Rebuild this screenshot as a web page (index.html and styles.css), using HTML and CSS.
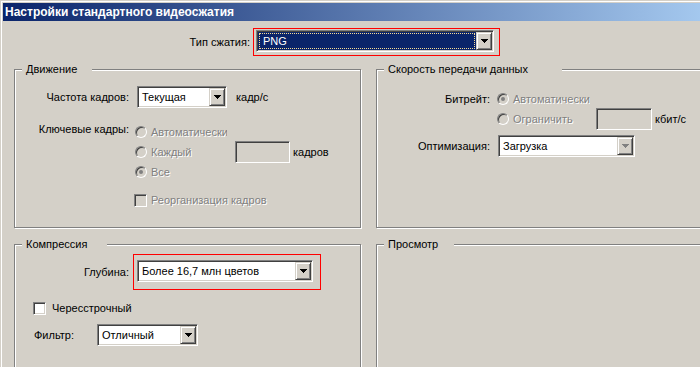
FILE: index.html
```html
<!DOCTYPE html>
<html lang="ru">

<head>
    <meta charset="UTF-8">
    <meta name="viewport" content="width=device-width, initial-scale=1.0">
    <link rel="stylesheet" href="styles.css">
    <title>Настройки стандартного видеосжатия</title>
</head>

<body>
    <div class="window">
        <div class="titlebar">Настройки стандартного видеосжатия</div>

        <!-- Тип сжатия -->
        <div class="type-row">
            <span class="type-label">Тип сжатия:</span>
            <div class="mark mark-type">
                <div class="combo combo-type">
                    <span class="combo-field selected"><span class="focus">PNG</span></span>
                    <span class="combo-btn"><svg width="7" height="4"><path d="M0 0H7V1H6V2H5V3H4V4H3V3H2V2H1V1H0Z"/></svg></span>
                </div>
            </div>
        </div>

        <div class="groups">
            <!-- Движение -->
            <div class="group group-motion">
                <span class="legend legend-motion">Движение</span>
                <div class="row">
                    <span class="lbl">Частота кадров:</span>
                    <div class="combo combo-rate">
                        <span class="combo-field">Текущая</span>
                        <span class="combo-btn"><svg width="7" height="4"><path d="M0 0H7V1H6V2H5V3H4V4H3V3H2V2H1V1H0Z"/></svg></span>
                    </div>
                    <span class="unit">кадр/с</span>
                </div>
                <div class="keyframes">
                    <span class="lbl lbl-top">Ключевые кадры:</span>
                    <div class="radios">
                        <div class="opt">
                            <span class="radio-item disabled"><span class="radio"></span>Автоматически</span>
                        </div>
                        <div class="opt">
                            <span class="radio-item disabled"><span class="radio"></span>Каждый</span>
                            <span class="edit edit-frames"></span>
                            <span class="after-edit">кадров</span>
                        </div>
                        <div class="opt">
                            <span class="radio-item disabled"><span class="radio checked"></span>Все</span>
                        </div>
                        <div class="opt opt-check disabled">
                            <span class="check"></span>Реорганизация кадров
                        </div>
                    </div>
                </div>
            </div>

            <!-- Скорость передачи данных -->
            <div class="group group-rate">
                <span class="legend legend-rate">Скорость передачи данных</span>
                <div class="row opt">
                    <span class="lbl lbl-rate">Битрейт:</span>
                    <span class="radio-item radio-wide disabled"><span class="radio checked"></span>Автоматически</span>
                </div>
                <div class="row opt opt-indent">
                    <span class="radio-item disabled"><span class="radio"></span>Ограничить</span>
                    <span class="edit edit-kbit"></span>
                    <span class="after-edit">кбит/с</span>
                </div>
                <div class="row row-optimize">
                    <span class="lbl lbl-rate">Оптимизация:</span>
                    <div class="combo combo-optimize">
                        <span class="combo-field">Загрузка</span>
                        <span class="combo-btn btn-disabled"><svg width="7" height="4"><path d="M0 0H7V1H6V2H5V3H4V4H3V3H2V2H1V1H0Z"/></svg></span>
                    </div>
                </div>
            </div>

            <!-- Компрессия -->
            <div class="group group-compress">
                <span class="legend legend-compress">Компрессия</span>
                <div class="row">
                    <span class="lbl">Глубина:</span>
                    <div class="mark mark-depth">
                        <div class="combo combo-depth">
                            <span class="combo-field">Более 16,7 млн цветов</span>
                            <span class="combo-btn"><svg width="7" height="4"><path d="M0 0H7V1H6V2H5V3H4V4H3V3H2V2H1V1H0Z"/></svg></span>
                        </div>
                    </div>
                </div>
                <div class="opt opt-interlace">
                    <span class="check check-on"></span>Чересстрочный
                </div>
                <div class="row row-filter">
                    <span class="lbl-filter">Фильтр:</span>
                    <div class="combo combo-filter">
                        <span class="combo-field">Отличный</span>
                        <span class="combo-btn"><svg width="7" height="4"><path d="M0 0H7V1H6V2H5V3H4V4H3V3H2V2H1V1H0Z"/></svg></span>
                    </div>
                </div>
            </div>

            <!-- Просмотр -->
            <div class="group group-preview">
                <span class="legend legend-preview">Просмотр</span>
            </div>
        </div>
    </div>
</body>

</html>
```

FILE: styles.css
```css
/* General */
html,
body {
    width: 700px;
    height: 367px;
    overflow: hidden;
}

body {
    margin: 0;
    background-color: #d4d0c8;
    color: #000;
    font-family: "Liberation Sans", Arial, sans-serif;
    font-size: 11px;
    line-height: 14px;
}

.window {
    width: 706px;
    margin: 1px 0 0 1px;
    padding: 1px 0 0 1px;
    border-top: 1px solid #fff;
    border-left: 1px solid #fff;
}

.titlebar {
    height: 18px;
    line-height: 18px;
    padding-left: 2px;
    background: linear-gradient(to right, #0a246a, #a6caf0);
    color: #fff;
    font-size: 12px;
    font-weight: bold;
    white-space: nowrap;
}

/* Тип сжатия */
.type-row {
    display: flex;
    align-items: center;
    margin-top: 7px;
}

.type-label {
    width: 247px;
    text-align: right;
}

.mark {
    border: 1px solid #ff0000;
}

.mark-type {
    margin-left: 3px;
    padding: 1px 5px 3px 2px;
}

.mark-depth {
    margin-left: 4px;
    padding: 5px 7px 7px 3px;
}

/* Combo box */
.combo {
    display: flex;
    height: 22px;
    box-sizing: border-box;
    padding: 1px;
    border: 1px solid;
    border-color: #808080 #fff #fff #808080;
    box-shadow: inset 1px 1px 0 #404040, inset -1px -1px 0 #d4d0c8;
    background: #d4d0c8;
}

.combo-field {
    flex: 1;
    background: #fff;
    line-height: 18px;
    padding-left: 3px;
    white-space: nowrap;
    overflow: hidden;
}

.combo-field.selected {
    background: #0a246a;
    color: #fff;
    padding: 1px;
}

.focus {
    display: block;
    height: 16px;
    line-height: 14px;
    box-sizing: border-box;
    padding-left: 3px;
    border: 1px dotted #f5db95;
}

.combo-btn {
    flex: none;
    width: 16px;
    height: 18px;
    box-sizing: border-box;
    display: flex;
    align-items: center;
    justify-content: center;
    background: #d4d0c8;
    border: 1px solid;
    border-color: #d4d0c8 #404040 #404040 #d4d0c8;
    box-shadow: inset 1px 1px 0 #fff, inset -1px -1px 0 #808080;
}

.combo-btn svg {
    display: block;
    fill: #000;
}

.btn-disabled svg {
    fill: #808080;
}

.combo-type {
    width: 238px;
}

.combo-rate {
    width: 90px;
    margin-left: 8px;
}

.combo-optimize {
    width: 137px;
    margin-left: 8px;
}

.combo-depth {
    width: 176px;
}

.combo-filter {
    width: 101px;
}

/* Group boxes */
.groups {
    display: grid;
    grid-template-columns: 347px 340px;
    grid-template-rows: 159px 140px;
    gap: 16px 15px;
    margin-top: 13px;
    padding-left: 11px;
}

.group {
    position: relative;
    border: 1px solid #808080;
    box-shadow: inset 1px 1px 0 #fff, 1px 1px 0 #fff;
}

.legend {
    position: absolute;
    top: -8px;
    left: 7px;
    box-sizing: border-box;
    padding-left: 4px;
    line-height: 14px;
    background: #d4d0c8;
    white-space: nowrap;
}

.legend-motion {
    width: 70px;
}

.legend-rate {
    width: 178px;
}

.legend-compress {
    width: 85px;
}

.legend-preview {
    width: 70px;
}

.row {
    display: flex;
    align-items: center;
}

.lbl {
    flex: none;
    width: 114px;
    text-align: right;
}

.unit {
    margin-left: 9px;
}

/* Движение */
.group-motion {
    padding-top: 16px;
}

.keyframes {
    display: flex;
    margin-top: 14px;
}

.lbl-top {
    line-height: 20px;
    margin-top: -3px;
}

.radios {
    margin-left: 6px;
}

.opt {
    display: flex;
    align-items: center;
    height: 20px;
    white-space: nowrap;
}

.radio-item {
    flex: none;
    width: 92px;
    display: flex;
    align-items: center;
    overflow: hidden;
}

.radio-wide {
    width: auto;
}

.disabled {
    color: #808080;
    text-shadow: 1px 1px 0 #fff;
}

.radio {
    flex: none;
    position: relative;
    width: 12px;
    height: 12px;
    margin-right: 4px;
    box-sizing: border-box;
    border-radius: 50%;
    border: 1px solid;
    border-color: #808080 #fff #fff #808080;
    box-shadow: inset 1px 1px 0 #404040, inset -1px -1px 0 #d4d0c8;
    background: #d4d0c8;
}

.radio.checked::after {
    content: "";
    position: absolute;
    left: 3px;
    top: 3px;
    width: 4px;
    height: 4px;
    border-radius: 50%;
    background: #808080;
}

.check {
    flex: none;
    width: 13px;
    height: 13px;
    margin-right: 4px;
    box-sizing: border-box;
    border: 1px solid;
    border-color: #808080 #fff #fff #808080;
    box-shadow: inset 1px 1px 0 #404040, inset -1px -1px 0 #d4d0c8;
    background: #d4d0c8;
}

.check-on {
    background: #fff;
    margin-right: 6px;
}

.opt-check {
    margin-top: 8px;
    margin-left: -1px;
}

.edit {
    flex: none;
    height: 22px;
    box-sizing: border-box;
    border: 1px solid;
    border-color: #808080 #fff #fff #808080;
    box-shadow: inset 1px 1px 0 #404040, inset -1px -1px 0 #d4d0c8;
    background: #d4d0c8;
}

.edit-frames {
    width: 55px;
    margin-left: 8px;
}

.edit-kbit {
    width: 56px;
    margin-left: 7px;
}

.after-edit {
    margin-left: 3px;
}

/* Скорость передачи данных */
.group-rate {
    padding-top: 19px;
}

.lbl-rate {
    width: 113px;
}

.radio-wide {
    margin-left: 7px;
}

.opt-indent {
    padding-left: 120px;
}

.row-optimize {
    margin-top: 6px;
}

/* Компрессия */
.group-compress {
    padding-top: 9px;
}

.opt-interlace {
    margin-top: 8px;
    padding-left: 18px;
}

.row-filter {
    margin-top: 6px;
}

.lbl-filter {
    flex: none;
    width: 63px;
    margin-left: 19px;
}
```
